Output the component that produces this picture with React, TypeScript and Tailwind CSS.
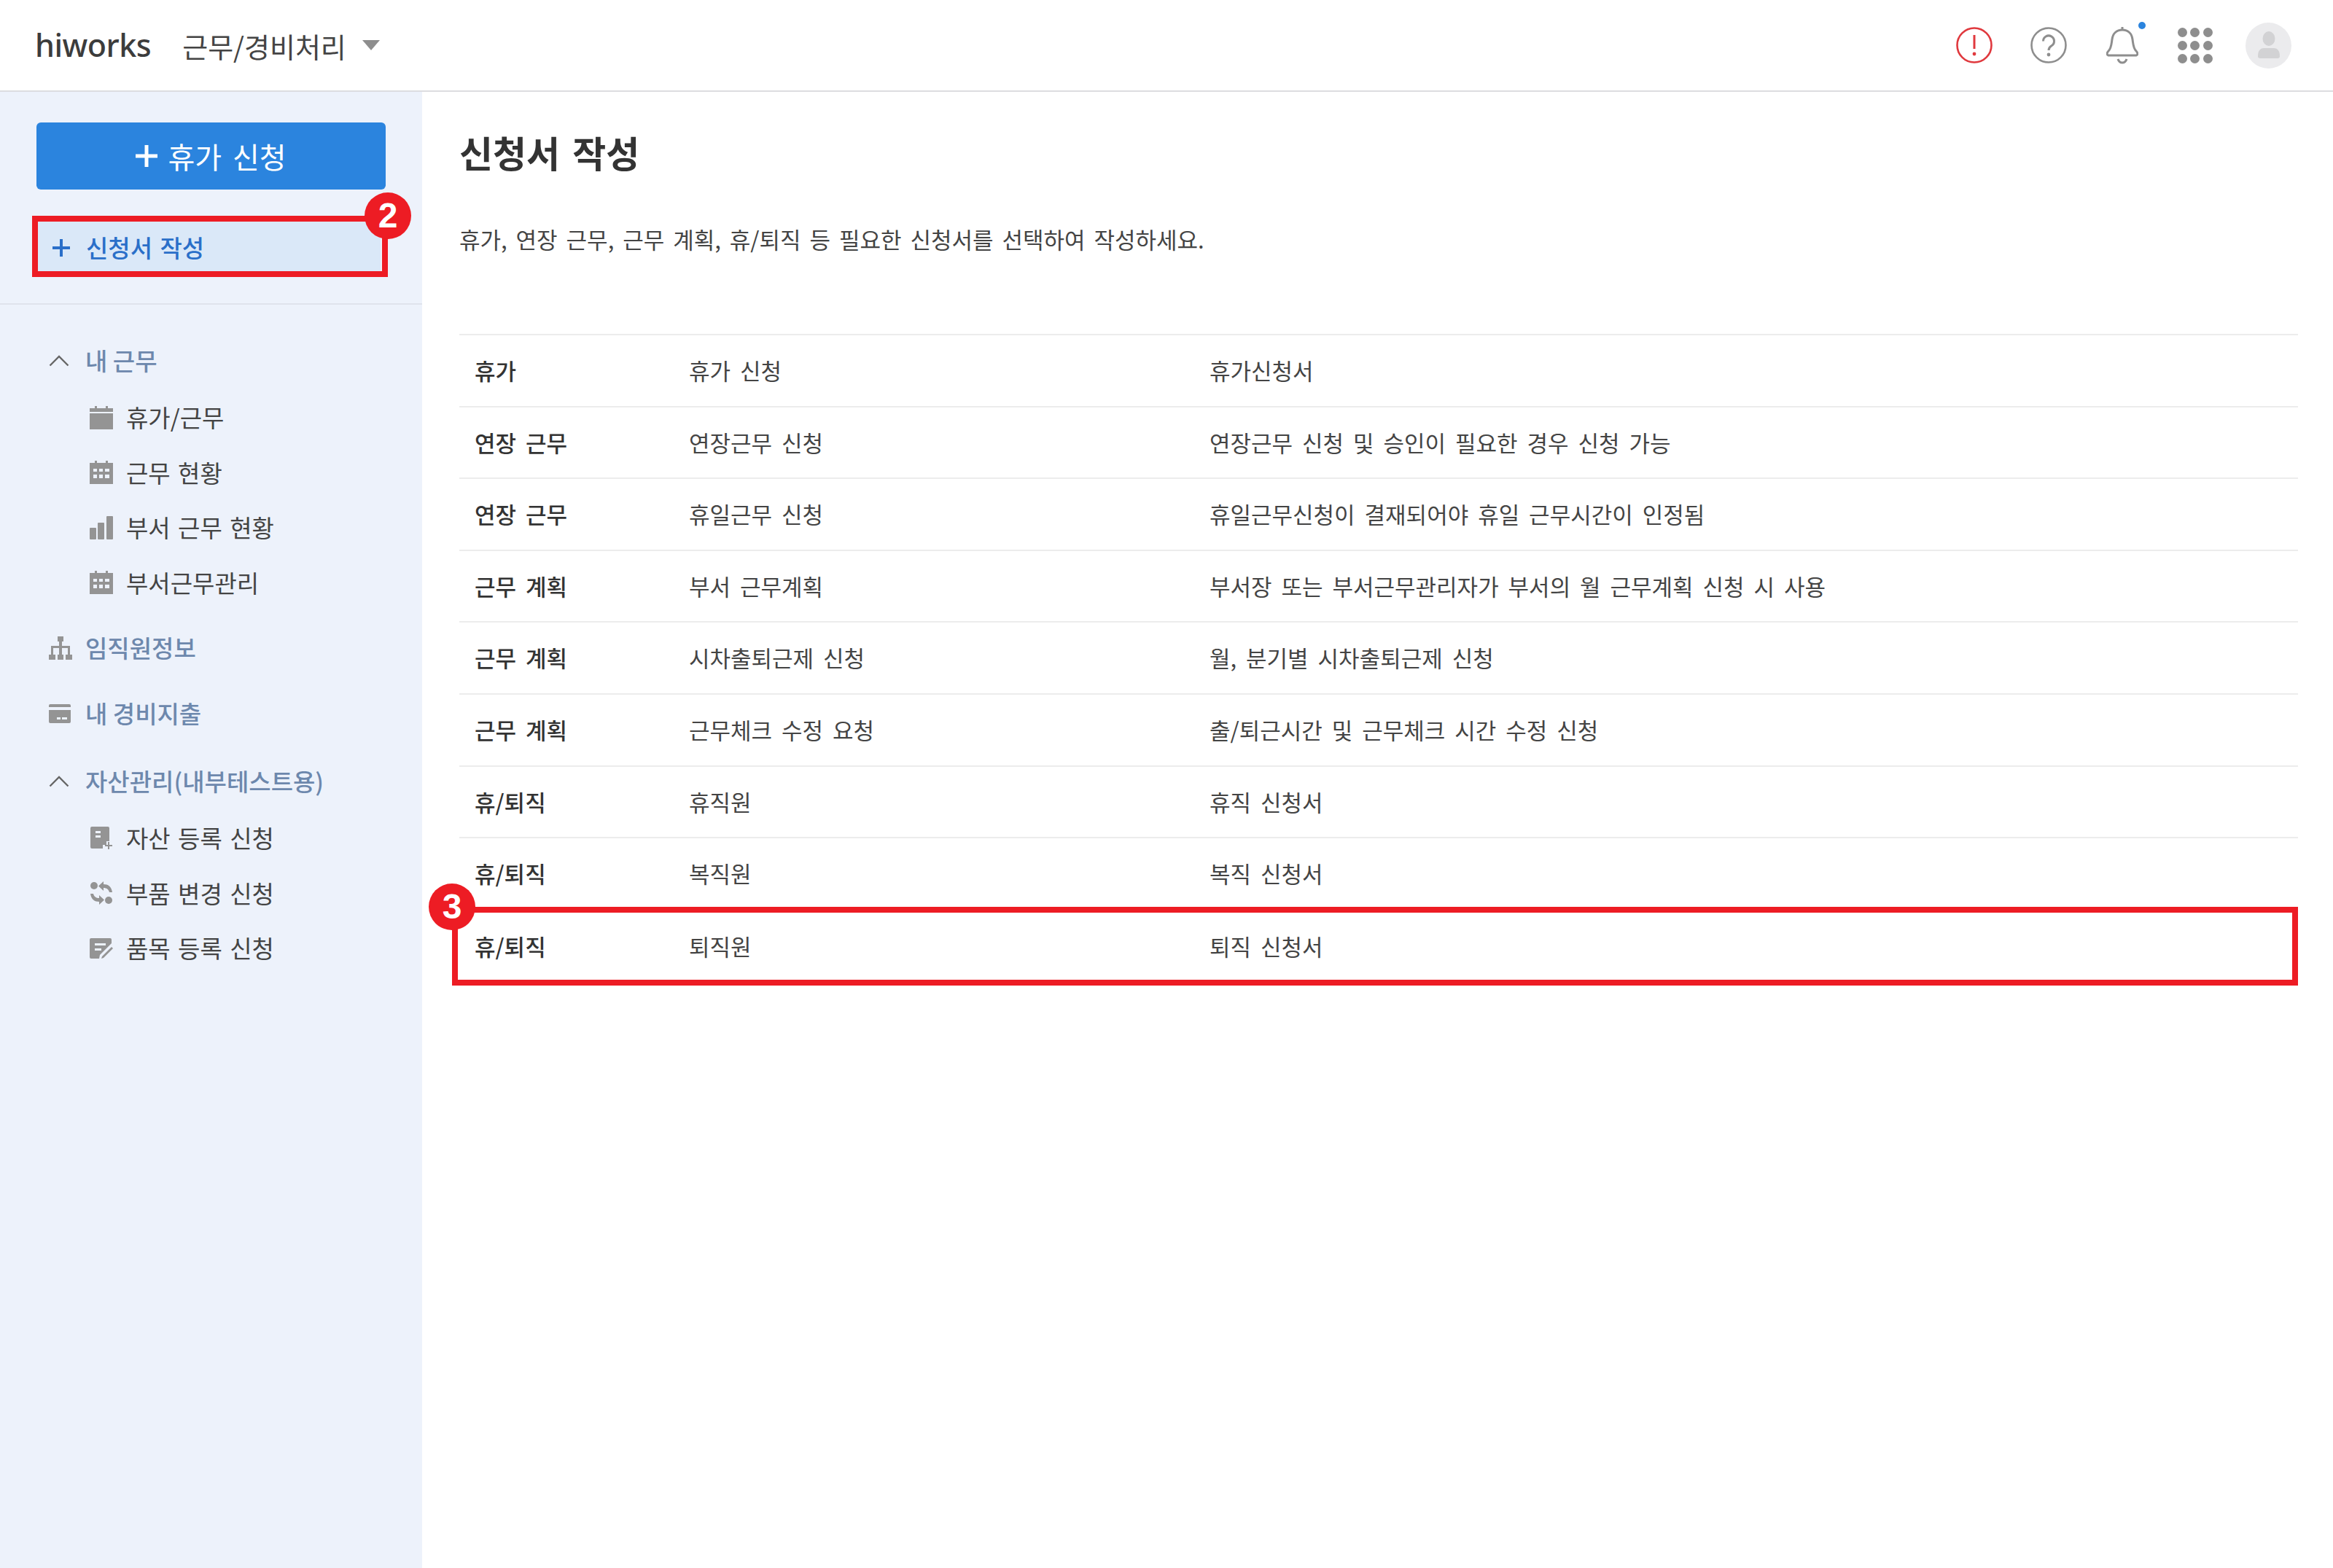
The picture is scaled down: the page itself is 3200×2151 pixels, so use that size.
const font = 'font-["Noto_Sans_CJK_KR","Liberation_Sans",sans-serif]';

const rows = [
  ['휴가', '휴가 신청', '휴가신청서'],
  ['연장 근무', '연장근무 신청', '연장근무 신청 및 승인이 필요한 경우 신청 가능'],
  ['연장 근무', '휴일근무 신청', '휴일근무신청이 결재되어야 휴일 근무시간이 인정됨'],
  ['근무 계획', '부서 근무계획', '부서장 또는 부서근무관리자가 부서의 월 근무계획 신청 시 사용'],
  ['근무 계획', '시차출퇴근제 신청', '월, 분기별 시차출퇴근제 신청'],
  ['근무 계획', '근무체크 수정 요청', '출/퇴근시간 및 근무체크 시간 수정 신청'],
  ['휴/퇴직', '휴직원', '휴직 신청서'],
  ['휴/퇴직', '복직원', '복직 신청서'],
  ['휴/퇴직', '퇴직원', '퇴직 신청서'],
];

function Chevron() {
  return (
    <svg width="28" height="16" viewBox="0 0 28 16" fill="none" stroke="#666" strokeWidth="2.4" className="shrink-0">
      <path d="M1.5 14.5 14 2l12.5 12.5" />
    </svg>
  );
}

function CalendarPlain() {
  return (
    <svg width="32" height="32" viewBox="0 0 32 32" fill="#949494">
      <rect x="7" y="0" width="3" height="5" />
      <rect x="22" y="0" width="3" height="5" />
      <rect x="0" y="3" width="32" height="5" />
      <rect x="0" y="10" width="32" height="22" />
    </svg>
  );
}

function CalendarGrid() {
  return (
    <svg width="32" height="32" viewBox="0 0 32 32" fill="#949494">
      <rect x="7" y="0" width="3" height="5" />
      <rect x="22" y="0" width="3" height="5" />
      <path
        fillRule="evenodd"
        d="M0 3h32v29H0ZM5 11v4h5v-4Zm8 0v4h5v-4Zm8 0v4h6v-4ZM5 19v5h5v-5Zm8 0v5h5v-5Zm8 0v5h6v-5Z"
      />
    </svg>
  );
}

function Bars() {
  return (
    <svg width="32" height="32" viewBox="0 0 32 32" fill="#949494">
      <rect x="0" y="16" width="9" height="16" rx="1" />
      <rect x="11" y="9" width="9" height="23" rx="1" />
      <rect x="23" y="0" width="9" height="32" rx="1" />
    </svg>
  );
}

function OrgChart() {
  return (
    <svg width="32" height="32" viewBox="0 0 32 32" fill="#949494">
      <rect x="12" y="0" width="8" height="7" />
      <rect x="14" y="7" width="4" height="18" />
      <path d="M3 13h26v12h-3v-9H6v9H3Z" />
      <rect x="0" y="25" width="9" height="7" />
      <rect x="12" y="25" width="8" height="7" />
      <rect x="23" y="25" width="9" height="7" />
    </svg>
  );
}

function Card() {
  return (
    <svg width="30" height="26" viewBox="0 0 30 26" fill="#949494">
      <path d="M2 0h26a2 2 0 0 1 2 2v2H0V2a2 2 0 0 1 2-2Z" />
      <path
        fillRule="evenodd"
        d="M0 8h30v16a2 2 0 0 1-2 2H2a2 2 0 0 1-2-2Zm11 10v3h5v-3Zm7 0v3h7v-3Z"
      />
    </svg>
  );
}

function DocPlus() {
  return (
    <svg width="32" height="32" viewBox="0 0 32 32">
      <path
        fill="#949494"
        fillRule="evenodd"
        d="M3 0h22a2 2 0 0 1 2 2v18h-4v5h-5v5H3a2 2 0 0 1-2-2V2a2 2 0 0 1 2-2Zm5 6v3h7V6Zm0 6v3h7v-3Z"
      />
      <path d="M26 21v10M21 26h10" stroke="#949494" strokeWidth="2" />
    </svg>
  );
}

function Swap() {
  return (
    <svg width="32" height="32" viewBox="0 0 32 32" fill="#949494">
      <circle cx="6" cy="6" r="5" />
      <circle cx="26" cy="26" r="5" />
      <path d="M19 0v4c6 0 11 3 12 11h-4c-1-4-4-6-8-6v4l-7-6.5Z" />
      <path d="M13 32v-4C7 28 2 25 1 17h4c1 4 4 6 8 6v-4l7 6.5Z" />
    </svg>
  );
}

function NotePen() {
  return (
    <svg width="32" height="28" viewBox="0 0 32 28">
      <path
        fill="#949494"
        fillRule="evenodd"
        d="M2 0h26a2 2 0 0 1 2 2v5L14 23l-1 5H2a2 2 0 0 1-2-2V2a2 2 0 0 1 2-2Zm5 7v3h15V7Zm0 7v3h9v-3Z"
      />
      <path d="m17 25 13-13 2 2-13 13-3 1Z" fill="#949494" />
    </svg>
  );
}

function Plus({ size, width, color }: { size: number; width: number; color: string }) {
  return (
    <svg width={size} height={size} viewBox={`0 0 ${size} ${size}`} stroke={color} strokeWidth={width} className="shrink-0">
      <path d={`M${size / 2} 0v${size}M0 ${size / 2}h${size}`} />
    </svg>
  );
}

function SubItem({ icon, label, className }: { icon: React.ReactNode; label: string; className?: string }) {
  return (
    <div className={`flex h-[75.5px] items-center pl-[123px] ${className ?? ''}`}>
      <div className="flex w-[50px] shrink-0 items-center">{icon}</div>
      <span className="text-[33px] text-[#444] [word-spacing:3px]">{label}</span>
    </div>
  );
}

function Group({ icon, label, className }: { icon: React.ReactNode; label: string; className?: string }) {
  return (
    <div className={`flex h-[76px] items-center pl-[67px] ${className ?? ''}`}>
      <div className="flex w-[50px] shrink-0 items-center">{icon}</div>
      <span className="text-[33px] font-medium whitespace-nowrap text-[#6d88ad]">{label}</span>
    </div>
  );
}

export default function App() {
  return (
    <div className={`${font} relative flex min-h-[2151px] w-[3200px] flex-col bg-white`}>
      {/* Header */}
      <header className="flex h-[126px] shrink-0 items-center border-b-2 border-[#dcdde0] bg-white">
        <span className='ml-[48px] font-["Noto_Sans",sans-serif] text-[43px] font-medium tracking-[-0.5px] text-[#3c3c3c]'>
          hiworks
        </span>
        <span className="ml-[43px] text-[38px] text-[#444]">근무/경비처리</span>
        <svg width="24" height="14" viewBox="0 0 24 14" fill="#8e8e8e" className="ml-[22px]">
          <path d="M0 0h24L12 14Z" />
        </svg>
        <div className="ml-auto flex items-center">
          <svg width="50" height="50" viewBox="0 0 50 50" fill="none" className="mr-[52px]">
            <circle cx="25" cy="25" r="23.5" stroke="#e0393e" strokeWidth="2.6" />
            <path d="M25 11v19" stroke="#e0393e" strokeWidth="3" />
            <circle cx="25" cy="37" r="2.4" fill="#e0393e" />
          </svg>
          <svg width="50" height="50" viewBox="0 0 50 50" fill="none" className="mr-[54px]">
            <circle cx="25" cy="25" r="23.5" stroke="#8e8e8e" strokeWidth="2.6" />
            <path d="M17.5 19.5a7.5 7.5 0 1 1 11.5 6.3c-2.5 1.6-4 2.8-4 6.2" stroke="#8e8e8e" strokeWidth="3" />
            <circle cx="25" cy="38" r="2.4" fill="#8e8e8e" />
          </svg>
          <div className="relative mr-[54px] h-[52px] w-[44px]">
            <svg width="44" height="52" viewBox="0 0 44 52" fill="none" stroke="#8e8e8e" strokeWidth="3">
              <path d="M22 1v4" />
              <path d="M3 40c-3-1-2-4 0-6 4-4 4-9 5-16 1-8 6-13 14-13s13 5 14 13c1 7 1 12 5 16 2 2 3 5 0 6Z" strokeLinejoin="round" />
              <path d="M16 45c1 3 3 5 6 5s5-2 6-5" />
            </svg>
            <div className="absolute -top-[6px] -right-[10px] h-[10px] w-[10px] rounded-full bg-[#2b84de]" />
          </div>
          <div className="mr-[46px] grid w-[47px] grid-cols-3 gap-[5px]">
            {Array.from({ length: 9 }).map((_, i) => (
              <div key={i} className="h-[13px] w-[13px] rounded-full bg-[#8e8e8e]" />
            ))}
          </div>
          <div className="mr-[57px] flex h-[63px] w-[63px] items-center justify-center rounded-full bg-[#ebebed]">
            <svg width="30" height="38" viewBox="0 0 30 38" fill="#d2d2d4">
              <ellipse cx="15" cy="10" rx="8.5" ry="10" />
              <path d="M0 34c0-7 3-11 8-11h14c5 0 8 4 8 11 0 2-1 3-3 3H3c-2 0-3-1-3-3Z" />
            </svg>
          </div>
        </div>
      </header>

      <div className="flex grow">
        {/* Sidebar */}
        <aside className="w-[579px] shrink-0 bg-[#edf2fb]">
          <div className="border-b-2 border-[#dfe3ec] px-[50px] pt-[42px] pb-[38px]">
            <button className="flex h-[92px] w-[479px] items-center justify-center gap-[14px] rounded-[6px] bg-[#2b84de] text-[40px] text-white [word-spacing:6px]">
              <Plus size={30} width={5} color="#fff" />
              휴가 신청
            </button>
            <div className="mt-[42px] flex h-[76px] w-[472px] items-center gap-[22px] bg-[#dae8f8] pl-[22px] text-[33px] font-medium text-[#2a6fc9] [word-spacing:3px]">
              <Plus size={24} width={4} color="#2a6fc9" />
              신청서 작성
            </div>
          </div>
          <div className="pt-[39px]">
            <Group icon={<Chevron />} label="내 근무" />
            <SubItem icon={<CalendarPlain />} label="휴가/근무" className="mt-[2px]" />
            <SubItem icon={<CalendarGrid />} label="근무 현황" />
            <SubItem icon={<Bars />} label="부서 근무 현황" />
            <SubItem icon={<CalendarGrid />} label="부서근무관리" />
            <Group icon={<OrgChart />} label="임직원정보" className="mt-[14px]" />
            <Group icon={<Card />} label="내 경비지출" className="mt-[14px]" />
            <Group icon={<Chevron />} label="자산관리(내부테스트용)" className="mt-[17px]" />
            <SubItem icon={<DocPlus />} label="자산 등록 신청" className="mt-[2px]" />
            <SubItem icon={<Swap />} label="부품 변경 신청" />
            <SubItem icon={<NotePen />} label="품목 등록 신청" />
          </div>
        </aside>

        {/* Main */}
        <main className="grow pt-[48px] pr-[48px] pl-[51px]">
          <h1 className="text-[50px] leading-[68px] font-bold text-[#333] [word-spacing:6px]">신청서 작성</h1>
          <p className="mt-[64px] text-[31px] leading-[44px] text-[#444] [word-spacing:5px]">
            휴가, 연장 근무, 근무 계획, 휴/퇴직 등 필요한 신청서를 선택하여 작성하세요.
          </p>
          <div className="mt-[108px] border-t-2 border-[#ececec]">
            {rows.map((row, i) => (
              <div
                key={i}
                className="flex h-[98.6px] items-center border-b-2 border-[#ececec] pl-[21px] text-[31px] text-[#444] [word-spacing:6px] last:border-b-0"
              >
                <div className="w-[294px] shrink-0 font-medium text-[#333]">{row[0]}</div>
                <div className="w-[714px] shrink-0">{row[1]}</div>
                <div>{row[2]}</div>
              </div>
            ))}
          </div>
        </main>
      </div>

      {/* Annotations */}
      <div className="absolute top-[296px] left-[44px] h-[84px] w-[488px] border-[8px] border-[#ed1c24]" />
      <div className='absolute top-[264px] left-[500px] flex h-[64px] w-[64px] items-center justify-center rounded-full bg-[#ed1c24] font-["Liberation_Sans",sans-serif] text-[48px] font-bold text-white'>
        2
      </div>
      <div className="absolute top-[1244px] left-[620px] h-[108px] w-[2532px] border-[8px] border-[#ed1c24]" />
      <div className='absolute top-[1212px] left-[588px] flex h-[64px] w-[64px] items-center justify-center rounded-full bg-[#ed1c24] font-["Liberation_Sans",sans-serif] text-[48px] font-bold text-white'>
        3
      </div>
    </div>
  );
}
